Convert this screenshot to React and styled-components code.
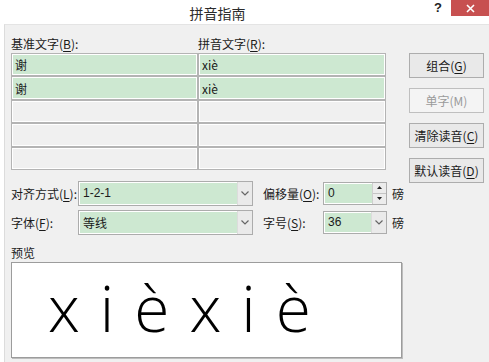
import React from "react";
import styled, { createGlobalStyle } from "styled-components";

const GlobalStyle = createGlobalStyle`
  html, body {
    margin: 0;
    padding: 0;
    background: #ffffff;
  }
  body {
    font-family: "Noto Sans CJK SC", "Noto Sans", sans-serif;
    font-size: 12px;
    color: #1a1a1a;
  }
`;

const Window = styled.div`
  width: 489px;
  height: 362px;
  background: #ffffff;
  display: flex;
  flex-direction: column;
  overflow: hidden;
`;

const TitleBar = styled.div`
  height: 24px;
  flex-shrink: 0;
  display: flex;
  align-items: flex-start;
  background: #ffffff;
`;

const Title = styled.div`
  flex: 1;
  text-align: center;
  padding-left: 10px;
  font-size: 14px;
  line-height: 26px;
  color: #2b2b2b;
`;

const HelpButton = styled.div`
  width: 26px;
  height: 16px;
  font-family: "Liberation Sans", sans-serif;
  font-weight: 700;
  font-size: 13px;
  line-height: 16px;
  text-align: center;
  color: #222;
`;

const CloseButton = styled.div`
  width: 38px;
  height: 16px;
  background: #c75050;
  display: flex;
  align-items: center;
  justify-content: center;
`;

const Body = styled.div`
  flex: 1;
  margin-left: 4px;
  background: #f0f0f0;
  border-left: 1px solid #dcdcdc;
  border-top: 1px solid #e4e4e4;
  padding: 8px 0 0 6px;
  display: flex;
  align-items: flex-start;
`;

const MainColumn = styled.div`
  width: 398px;
  display: flex;
  flex-direction: column;
`;

const LabelRow = styled.div`
  display: grid;
  grid-template-columns: 187px 188px;
  height: 20px;
  align-items: center;
`;

const Label = styled.span`
  font-size: 12px;
  color: #1a1a1a;
  white-space: nowrap;
`;

const Key = styled.u`
  text-underline-offset: 2px;
`;

const Grid = styled.div`
  width: 375px;
  display: grid;
  grid-template-columns: 187px 188px;
  grid-template-rows: repeat(5, 23.4px);
`;

const Cell = styled.div`
  border: 1px solid #b4b4b4;
  box-shadow: inset 0 0 0 1px #ffffff;
  background: ${({ $filled }) => ($filled ? "#cde8d1" : "#f0f0f0")};
  padding: 0 3px;
  display: flex;
  align-items: center;
  font-size: 12px;
  color: #1a1a1a;
`;

const ButtonColumn = styled.div`
  margin-top: 20px;
  display: flex;
  flex-direction: column;
  gap: 10px;
`;

const Button = styled.div`
  width: 75px;
  height: 25px;
  box-sizing: border-box;
  border: 1px solid ${({ $disabled }) => ($disabled ? "#bfbfbf" : "#adadad")};
  background: ${({ $disabled }) => ($disabled ? "#f4f4f4" : "#e9e9e9")};
  color: ${({ $disabled }) => ($disabled ? "#9a9a9a" : "#1a1a1a")};
  display: flex;
  align-items: center;
  justify-content: center;
  font-size: 12px;
  white-space: nowrap;
`;

const Options = styled.div`
  margin-top: 11px;
  display: grid;
  grid-template-columns: 67px 175px 10px 60px 64px 20px;
  grid-template-rows: 25px 25px;
  row-gap: 4px;
  align-items: center;
`;

const OptionLabel = styled.span`
  font-size: 12px;
  white-space: nowrap;
  grid-column: ${({ $col }) => $col};
`;

const Unit = styled.span`
  font-size: 12px;
  padding-left: 5px;
`;

const Combo = styled.div`
  height: ${({ $small }) => ($small ? "23px" : "25px")};
  box-sizing: border-box;
  border: 1px solid #acacac;
  display: flex;
  background: #ffffff;
`;

const ComboValue = styled.div`
  flex: 1;
  margin: 1px 0 1px 1px;
  background: #cde8d1;
  display: flex;
  align-items: center;
  padding-left: 3px;
  font-size: 12px;
  font-family: "Liberation Sans", "Noto Sans CJK SC", sans-serif;
`;

const ArrowBox = styled.div`
  width: 14px;
  border-left: 1px solid #dcdcdc;
  background: #eaeaea;
  display: flex;
  align-items: center;
  justify-content: center;
`;

const SpinBox = styled.div`
  width: 13px;
  border-left: 1px solid #cfcfcf;
  display: flex;
  flex-direction: column;
`;

const SpinPart = styled.div`
  flex: 1;
  background: #ececec;
  border-bottom: ${({ $top }) => ($top ? "1px solid #c4c4c4" : "none")};
  display: flex;
  align-items: center;
  justify-content: center;
`;

const PreviewLabel = styled.div`
  margin-top: 9px;
  height: 18px;
  font-size: 12px;
  line-height: 18px;
`;

const PreviewBox = styled.div`
  width: 391px;
  height: 96px;
  background: #ffffff;
  border: 1px solid #9c9c9c;
  box-shadow: 1px 1px 0 #bdbdbd;
  padding: 0 0 0 36px;
  box-sizing: border-box;
  overflow: hidden;
`;

const PreviewText = styled.div`
  font-family: "Open Sans", "Liberation Sans", sans-serif;
  font-weight: 300;
  font-size: 64px;
  line-height: 64px;
  letter-spacing: 20px;
  color: #000;
  margin-top: 13px;
  white-space: nowrap;
`;

const Chevron = () => (
  <svg width="8" height="5" viewBox="0 0 8 5">
    <path d="M0.5 0.5 L4 4 L7.5 0.5" fill="none" stroke="#666" strokeWidth="1.2" />
  </svg>
);

const Tri = ({ up }) => (
  <svg width="5" height="3" viewBox="0 0 5 3">
    <path d={up ? "M0 3 L2.5 0 L5 3 Z" : "M0 0 L2.5 3 L5 0 Z"} fill="#222" />
  </svg>
);

const rows = [
  ["谢", "xiè"],
  ["谢", "xiè"],
  ["", ""],
  ["", ""],
  ["", ""],
];

export default function App() {
  return (
    <>
      <GlobalStyle />
      <Window>
        <TitleBar>
          <Title>拼音指南</Title>
          <HelpButton>?</HelpButton>
          <CloseButton>
            <svg width="9" height="9" viewBox="0 0 9 9">
              <path d="M1 1 L8 8 M8 1 L1 8" stroke="#fff" strokeWidth="1.6" />
            </svg>
          </CloseButton>
        </TitleBar>
        <Body>
          <MainColumn>
            <LabelRow>
              <Label>基准文字(<Key>B</Key>):</Label>
              <Label>拼音文字(<Key>R</Key>):</Label>
            </LabelRow>
            <Grid>
              {rows.map(([base, ruby], i) => (
                <React.Fragment key={i}>
                  <Cell $filled={!!base}>{base}</Cell>
                  <Cell $filled={!!ruby}>{ruby}</Cell>
                </React.Fragment>
              ))}
            </Grid>

            <Options>
              <OptionLabel $col={1}>对齐方式(<Key>L</Key>):</OptionLabel>
              <Combo>
                <ComboValue>1-2-1</ComboValue>
                <ArrowBox><Chevron /></ArrowBox>
              </Combo>
              <span />
              <OptionLabel $col={4}>偏移量(<Key>O</Key>):</OptionLabel>
              <Combo $small>
                <ComboValue>0</ComboValue>
                <SpinBox>
                  <SpinPart $top><Tri up /></SpinPart>
                  <SpinPart><Tri /></SpinPart>
                </SpinBox>
              </Combo>
              <Unit>磅</Unit>

              <OptionLabel $col={1}>字体(<Key>F</Key>):</OptionLabel>
              <Combo>
                <ComboValue>等线</ComboValue>
                <ArrowBox><Chevron /></ArrowBox>
              </Combo>
              <span />
              <OptionLabel $col={4}>字号(<Key>S</Key>):</OptionLabel>
              <Combo $small>
                <ComboValue>36</ComboValue>
                <ArrowBox><Chevron /></ArrowBox>
              </Combo>
              <Unit>磅</Unit>
            </Options>

            <PreviewLabel>预览</PreviewLabel>
            <PreviewBox>
              <PreviewText>xièxiè</PreviewText>
            </PreviewBox>
          </MainColumn>
          <ButtonColumn>
            <Button>组合(<Key>G</Key>)</Button>
            <Button $disabled>单字(M)</Button>
            <Button>清除读音(<Key>C</Key>)</Button>
            <Button>默认读音(<Key>D</Key>)</Button>
          </ButtonColumn>
        </Body>
      </Window>
    </>
  );
}
